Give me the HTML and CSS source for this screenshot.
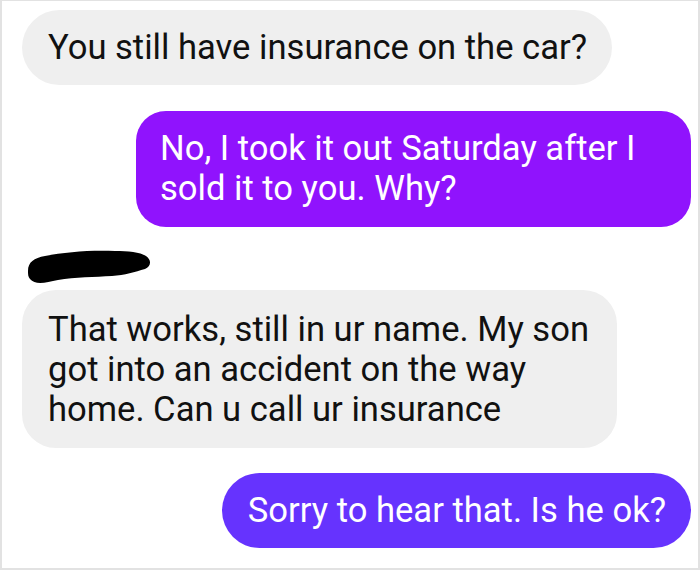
FILE: index.html
```html
<!DOCTYPE html>
<html>
<head>
<meta charset="utf-8">
<link rel="stylesheet" href="styles.css">
</head>
<body>
<div class="frame">
  <div class="row in"><div class="bubble grey b1">You still have insurance on the car?</div></div>
  <div class="row out"><div class="bubble violet b2">No, I took it out Saturday after I<br>sold it to you. Why?</div></div>
  <div class="row in name">
    <svg class="scribble" width="140" height="40" viewBox="22 248 140 40">
      <path d="M28 271 C28 262 34 258 45 256 C65 252 90 250 115 251 C128 251 140 252 146 256 C152 260 151 267 145 269 C135 272 125 275 112 276 C95 277 75 277 58 280 C45 283 35 285 30 279 C28 277 28 274 28 271 Z" fill="#000"/>
    </svg>
  </div>
  <div class="row in"><div class="bubble grey b3">That works, still in ur name. My son<br>got into an accident on the way<br>home. Can u call ur insurance</div></div>
  <div class="row out"><div class="bubble indigo b4">Sorry to hear that. Is he ok?</div></div>
</div>
</body>
</html>
```

FILE: styles.css
```css
html, body {
  margin: 0;
  padding: 0;
  background: #fff;
}
.frame {
  box-sizing: border-box;
  width: 700px;
  height: 570px;
  border: 2px solid #e2e2e2;
  border-top-width: 1px;
  border-right-width: 2px;
  background: #fff;
  padding: 9px 7px 0 20px;
  display: flex;
  flex-direction: column;
  font-family: Roboto, "Liberation Sans", sans-serif;
}
.row {
  display: flex;
}
.row.in { justify-content: flex-start; }
.row.out { justify-content: flex-end; }
.bubble {
  box-sizing: border-box;
  font-size: 34.6px;
  line-height: 40px;
  padding: 17px 25px 18px 26px;
  border-radius: 38px;
  white-space: nowrap;
}
.grey {
  background: #efefef;
  color: #111;
}
.violet {
  background: #9013fd;
  color: #fff;
}
.indigo {
  background: #6633fe;
  color: #fff;
}
.b1 { margin-bottom: 26px; }
.b2 { width: 555px; border-radius: 30px; padding-left: 24px; padding-bottom: 19px; }
.name { height: 63px; align-items: flex-start; }
.scribble { display: block; margin-top: 21px; }
.b3 { border-radius: 34px; margin-bottom: 25px; padding-top: 19px; padding-bottom: 19px; padding-right: 28px; }
.b4 { }
```
